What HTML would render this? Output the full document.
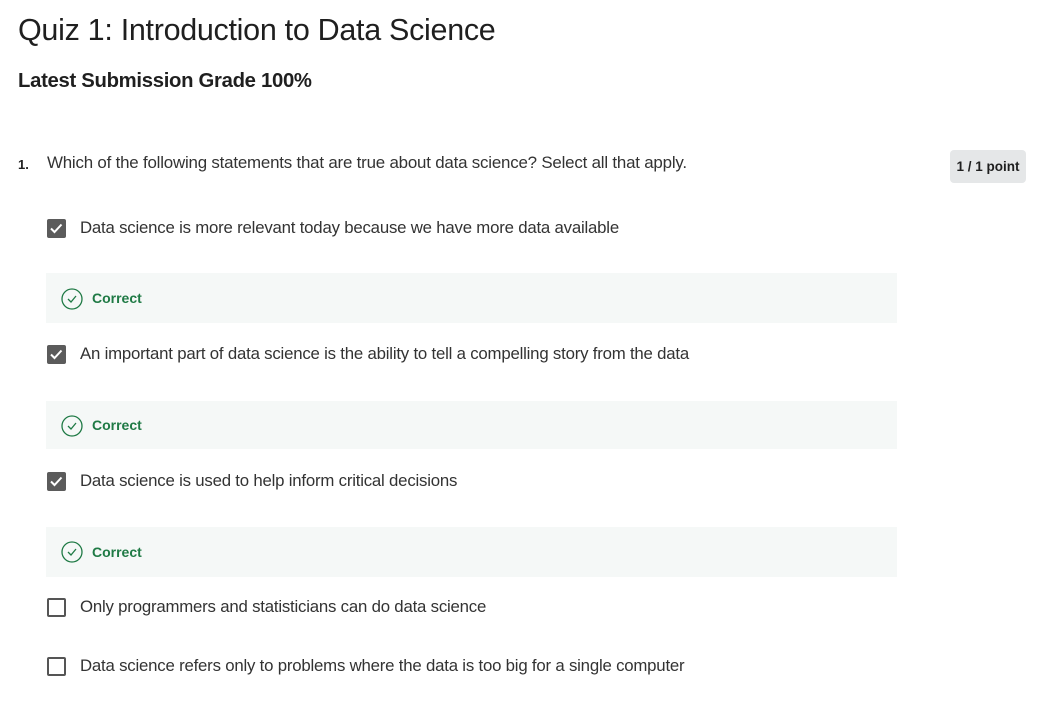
<!DOCTYPE html>
<html><head><style>
body{margin:0;width:1053px;height:728px;background:#fff;font-family:"Liberation Sans",sans-serif;color:#1f1f1f;position:relative;overflow:hidden}
.a{position:absolute;white-space:nowrap}
.h1{left:18px;top:13px;font-size:30.5px;color:#1f1f1f;letter-spacing:-0.3px}
.h2{left:18px;top:70px;font-size:20.3px;font-weight:bold;color:#1f1f1f;letter-spacing:-0.3px}
.q{left:47px;top:153px;font-size:16.9px;color:#333;letter-spacing:-0.2px}
.num{left:18px;top:157px;font-size:13px;font-weight:bold;color:#1f1f1f}
.badge{left:950px;top:150px;width:76px;height:33px;background:#e5e7e8;border-radius:4px;font-size:13.5px;font-weight:bold;text-align:center;line-height:33px;color:#1f1f1f}
.cb{position:absolute;left:47px;width:19px;height:19px;border-radius:2px;box-sizing:border-box}
.cb.on{background:#5b5b5b}
.cb.off{border:2px solid #555;background:#fff}
.opt{left:80px;font-size:16.8px;color:#333;letter-spacing:-0.2px}
.fb{position:absolute;left:46px;width:851px;background:#f5f8f7}
.fb span{position:absolute;left:46px;font-size:14px;font-weight:bold;color:#1f7a45}
.fb svg{position:absolute;left:15px}
</style></head><body>
<div class="a h1">Quiz 1: Introduction to Data Science</div>
<div class="a h2">Latest Submission Grade 100%</div>
<div class="a num">1.</div>
<div class="a q">Which of the following statements that are true about data science? Select all that apply.</div>
<div class="a badge">1 / 1 point</div>

<div class="cb on" style="top:219px"><svg width="19" height="19"><path d="M4 9.5l3.5 3.5 7-7.5" stroke="#fff" stroke-width="2" fill="none"/></svg></div>
<div class="a opt" style="top:218px">Data science is more relevant today because we have more data available</div>
<div class="fb" style="top:273px;height:50px"><svg width="22" height="22" style="top:15px"><circle cx="11" cy="11" r="10" stroke="#1f7a45" stroke-width="1.3" fill="none"/><path d="M7 11l3 3 5-6" stroke="#1f7a45" stroke-width="1.3" fill="none"/></svg><span style="top:17px">Correct</span></div>

<div class="cb on" style="top:345px"><svg width="19" height="19"><path d="M4 9.5l3.5 3.5 7-7.5" stroke="#fff" stroke-width="2" fill="none"/></svg></div>
<div class="a opt" style="top:344px">An important part of data science is the ability to tell a compelling story from the data</div>
<div class="fb" style="top:401px;height:48px"><svg width="22" height="22" style="top:14px"><circle cx="11" cy="11" r="10" stroke="#1f7a45" stroke-width="1.3" fill="none"/><path d="M7 11l3 3 5-6" stroke="#1f7a45" stroke-width="1.3" fill="none"/></svg><span style="top:16px">Correct</span></div>

<div class="cb on" style="top:472px"><svg width="19" height="19"><path d="M4 9.5l3.5 3.5 7-7.5" stroke="#fff" stroke-width="2" fill="none"/></svg></div>
<div class="a opt" style="top:471px">Data science is used to help inform critical decisions</div>
<div class="fb" style="top:527px;height:50px"><svg width="22" height="22" style="top:14px"><circle cx="11" cy="11" r="10" stroke="#1f7a45" stroke-width="1.3" fill="none"/><path d="M7 11l3 3 5-6" stroke="#1f7a45" stroke-width="1.3" fill="none"/></svg><span style="top:17px">Correct</span></div>

<div class="cb off" style="top:598px"></div>
<div class="a opt" style="top:597px">Only programmers and statisticians can do data science</div>
<div class="cb off" style="top:657px"></div>
<div class="a opt" style="top:656px">Data science refers only to problems where the data is too big for a single computer</div>
</body></html>
